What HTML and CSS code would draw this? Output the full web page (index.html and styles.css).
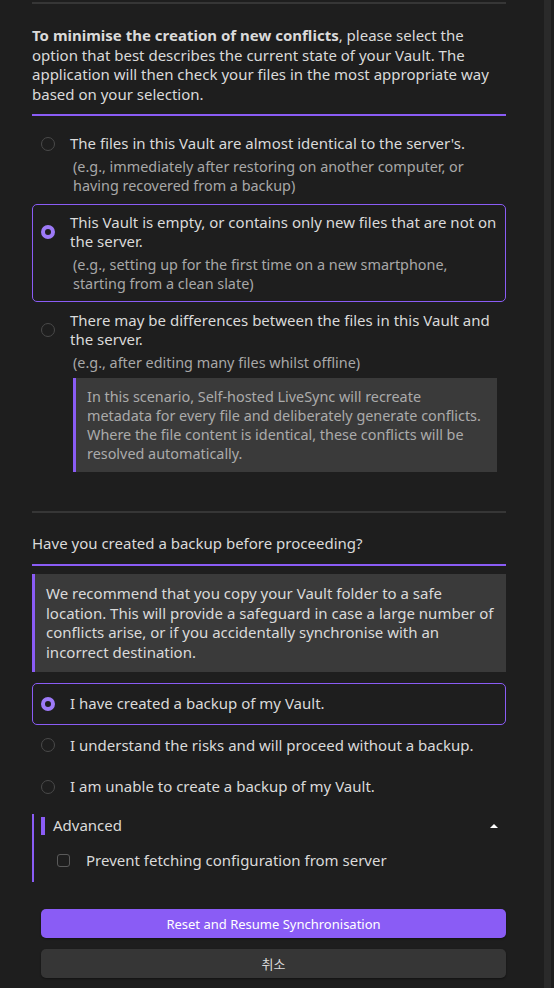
FILE: index.html
```html
<!DOCTYPE html>
<html lang="en">
<head>
    <meta charset="UTF-8">
    <meta name="viewport" content="width=device-width, initial-scale=1.0">
    <title>Reset Synchronisation</title>
    <link rel="stylesheet" href="styles.css">
</head>
<body>
    <div class="modal">
        <div class="modal-content">
            <hr class="rule">

            <!-- Vault state -->
            <p class="intro"><strong>To minimise the creation of new conflicts</strong>, please select the option that best describes the current state of your Vault. The application will then check your files in the most appropriate way based on your selection.</p>
            <hr class="accent-rule">

            <div class="options">
                <div class="option">
                    <div class="option-head">
                        <span class="radio"></span>
                        <span class="option-title">The files in this Vault are almost identical to the server's.</span>
                    </div>
                    <div class="option-note">(e.g., immediately after restoring on another computer, or having recovered from a backup)</div>
                </div>
                <div class="option selected">
                    <div class="option-head">
                        <span class="radio"></span>
                        <span class="option-title">This Vault is empty, or contains only new files that are not on the server.</span>
                    </div>
                    <div class="option-note">(e.g., setting up for the first time on a new smartphone, starting from a clean slate)</div>
                </div>
                <div class="option">
                    <div class="option-head">
                        <span class="radio"></span>
                        <span class="option-title">There may be differences between the files in this Vault and the server.</span>
                    </div>
                    <div class="option-note">(e.g., after editing many files whilst offline)</div>
                    <div class="callout callout-inner">In this scenario, Self-hosted LiveSync will recreate metadata for every file and deliberately generate conflicts. Where the file content is identical, these conflicts will be resolved automatically.</div>
                </div>
            </div>

            <hr class="rule section-rule">

            <!-- Backup -->
            <p class="question">Have you created a backup before proceeding?</p>
            <hr class="accent-rule">
            <div class="callout callout-backup">We recommend that you copy your Vault folder to a safe location. This will provide a safeguard in case a large number of conflicts arise, or if you accidentally synchronise with an incorrect destination.</div>

            <div class="options backup-options">
                <div class="option selected">
                    <div class="option-head">
                        <span class="radio"></span>
                        <span class="option-title">I have created a backup of my Vault.</span>
                    </div>
                </div>
                <div class="option">
                    <div class="option-head">
                        <span class="radio"></span>
                        <span class="option-title">I understand the risks and will proceed without a backup.</span>
                    </div>
                </div>
                <div class="option">
                    <div class="option-head">
                        <span class="radio"></span>
                        <span class="option-title">I am unable to create a backup of my Vault.</span>
                    </div>
                </div>
            </div>

            <div class="advanced">
                <div class="advanced-summary">
                    <span class="marker"></span>
                    <span class="advanced-title">Advanced</span>
                    <span class="caret"></span>
                </div>
                <label class="check-row">
                    <span class="checkbox"></span>
                    <span>Prevent fetching configuration from server</span>
                </label>
            </div>

            <div class="buttons">
                <button class="btn btn-primary">Reset and Resume Synchronisation</button>
                <button class="btn btn-cancel">취소</button>
            </div>
        </div>
        <div class="scrollbar"></div>
    </div>
</body>
</html>
```

FILE: styles.css
```css
body {
    margin: 0;
    padding: 0;
    background-color: #1e1e1e;
    color: #dadada;
    font-family: "Noto Sans", "Noto Sans CJK KR", sans-serif;
    font-size: 15px;
    line-height: 1.3;
    overflow: hidden;
}
.modal {
    display: flex;
    height: 988px;
}
.modal-content {
    width: 474px;
    margin-left: 32px;
}
.scrollbar {
    width: 7px;
    margin-left: auto;
    margin-right: 3px;
    background-color: #2a2a2a;
}
.rule {
    margin: 2px 0 0 0;
    border: none;
    height: 2px;
    background-color: #363636;
}
.section-rule {
    margin-top: 30px;
}
.accent-rule {
    margin: 0;
    border: none;
    height: 2px;
    background-color: #8a5cf5;
}
.intro {
    margin: 22px 0 10px 0;
}
.intro strong {
    font-weight: 700;
}
.options {
    margin-top: 9px;
}
.option {
    border: 1px solid transparent;
    border-radius: 5px;
    padding: 8px 8px;
}
.option.selected {
    border-color: #8a5cf5;
}
.option-head {
    display: flex;
    align-items: center;
    gap: 15px;
}
.radio {
    flex: none;
    width: 14px;
    height: 14px;
    box-sizing: border-box;
    border-radius: 50%;
    border: 1px solid #4a4a4a;
    background-color: #1e1e1e;
}
.option.selected .radio {
    border: 4px solid #9d7af7;
}
.option-note {
    margin: 3px 0 0 3px;
    padding-left: 29px;
    color: #a8a8a8;
    font-size: 14.4px;
    line-height: 19px;
}
.callout {
    background-color: #3a3a3a;
    border-left: 3px solid #8a5cf5;
    padding: 10px 11px 9px 11px;
}
.callout-backup {
    margin-top: 8px;
    padding-bottom: 10px;
}
.callout-inner {
    margin: 6px 0 0 32px;
    padding: 9px 11px 9px 11px;
    color: #ababab;
    font-size: 14.4px;
    line-height: 19px;
}
.question {
    margin: 21px 0 11px 0;
}
.backup-options {
    margin-top: 11px;
}
.backup-options .option {
    padding: 10px 8px;
}
.advanced {
    margin-top: 6px;
    border-left: 2px solid #8a5cf5;
    padding: 3px 0 12px 7px;
}
.advanced-summary {
    display: flex;
    align-items: center;
    height: 18px;
}
.marker {
    width: 4px;
    height: 18px;
    background-color: #8a5cf5;
    margin-right: 8px;
}
.advanced-title {
    flex: 1;
}
.caret {
    width: 0;
    height: 0;
    border-left: 4px solid transparent;
    border-right: 4px solid transparent;
    border-bottom: 4px solid #ffffff;
    margin-right: 8px;
}
.check-row {
    display: flex;
    align-items: center;
    gap: 16px;
    margin: 16px 0 0 16px;
}
.checkbox {
    width: 13px;
    height: 13px;
    box-sizing: border-box;
    border: 1px solid #5a5a5a;
    border-radius: 3px;
}
.buttons {
    margin: 27px 0 0 9px;
    display: flex;
    flex-direction: column;
    gap: 11px;
}
.btn {
    height: 29px;
    border: none;
    border-radius: 5px;
    font-family: "Noto Sans", "Noto Sans CJK KR", sans-serif;
    font-size: 13px;
    cursor: pointer;
}
.btn-primary {
    background-color: #8a5cf5;
    color: #ffffff;
    box-shadow: 0 1px 2px rgba(0, 0, 0, 0.4);
}
.btn-cancel {
    background-color: #363636;
    color: #dadada;
    box-shadow: 0 1px 2px rgba(0, 0, 0, 0.4);
}
```
